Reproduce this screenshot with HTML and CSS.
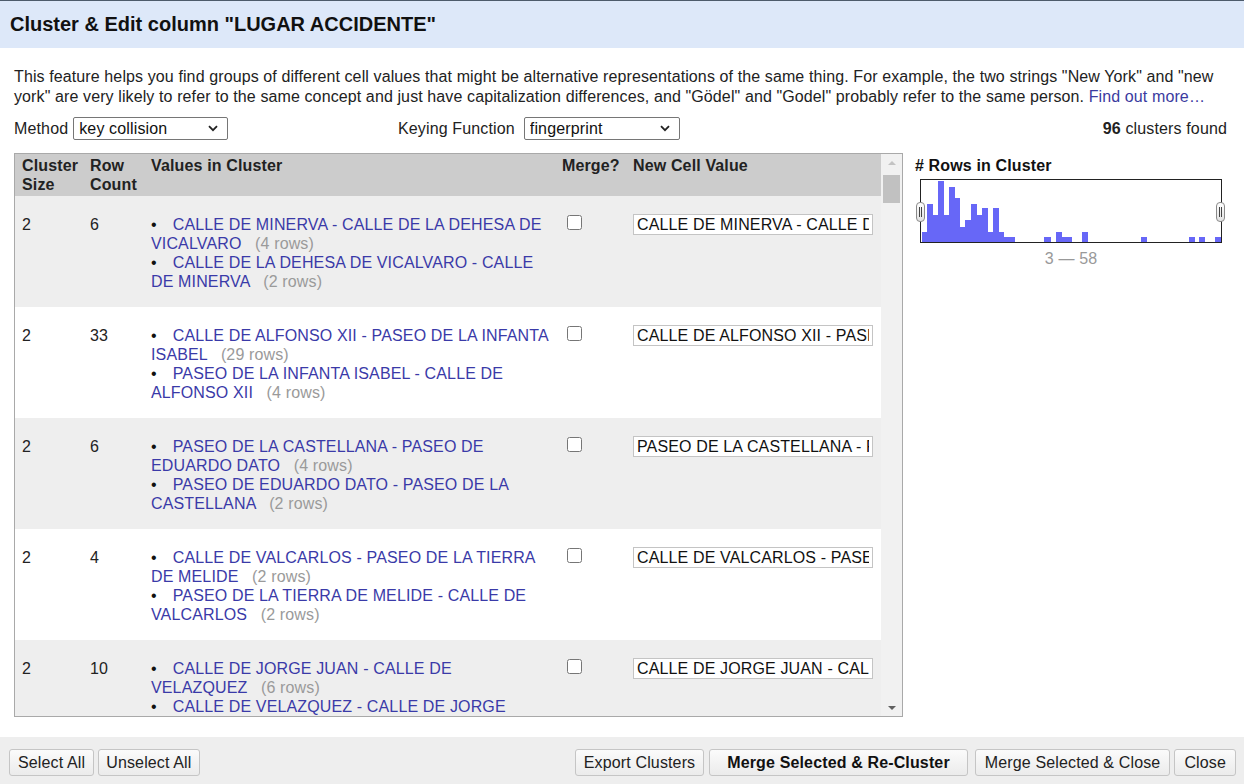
FILE: index.html
```html
<!DOCTYPE html>
<html lang="en">
<head>
<meta charset="utf-8">
<title>Cluster &amp; Edit</title>
<link rel="stylesheet" href="styles.css">
</head>
<body>
<div class="dialog">
  <div class="dialog-header">Cluster &amp; Edit column "LUGAR ACCIDENTE"</div>
  <div class="dialog-body">
    <p class="intro">This feature helps you find groups of different cell values that might be alternative representations of the same thing. For example, the two strings "New York" and "new york" are very likely to refer to the same concept and just have capitalization differences, and "Gödel" and "Godel" probably refer to the same person. <a href="#" class="link">Find out more…</a></p>
    <div class="controls">
      <div class="ctl ctl-method">
        <span>Method</span>
        <span class="sel-wrap">
          <select class="sel"><option>key collision</option></select>
          <svg class="chev" width="10" height="7" viewBox="0 0 10 7"><path d="M1 1.2 L5 5.2 L9 1.2" fill="none" stroke="#222" stroke-width="1.8"/></svg>
        </span>
      </div>
      <div class="ctl ctl-key">
        <span>Keying Function</span>
        <span class="sel-wrap">
          <select class="sel"><option>fingerprint</option></select>
          <svg class="chev" width="10" height="7" viewBox="0 0 10 7"><path d="M1 1.2 L5 5.2 L9 1.2" fill="none" stroke="#222" stroke-width="1.8"/></svg>
        </span>
      </div>
      <div class="found"><b>96</b> clusters found</div>
    </div>
    <div class="main">
      <div class="table-box">
        <div class="table-scroll">
          <table class="clusters">
            <colgroup>
              <col class="c-size"><col class="c-count"><col class="c-values"><col class="c-merge"><col class="c-new">
            </colgroup>
            <thead>
              <tr><th>Cluster Size</th><th>Row Count</th><th>Values in Cluster</th><th>Merge?</th><th>New Cell Value</th></tr>
            </thead>
            <tbody>
              <tr class="odd">
                <td>2</td><td>6</td>
                <td>
                  <div class="val"><span class="bullet">•</span><a href="#">CALLE DE MINERVA - CALLE DE LA DEHESA DE VICALVARO</a> <span class="cnt">(4 rows)</span></div>
                  <div class="val"><span class="bullet">•</span><a href="#">CALLE DE LA DEHESA DE VICALVARO - CALLE DE MINERVA</a> <span class="cnt">(2 rows)</span></div>
                </td>
                <td><input type="checkbox" class="chk"></td>
                <td><input type="text" class="newval" value="CALLE DE MINERVA - CALLE DE LA DEHESA DE VICALVARO"></td>
              </tr>
              <tr class="even">
                <td>2</td><td>33</td>
                <td>
                  <div class="val"><span class="bullet">•</span><a href="#">CALLE DE ALFONSO XII - PASEO DE LA INFANTA ISABEL</a> <span class="cnt">(29 rows)</span></div>
                  <div class="val"><span class="bullet">•</span><a href="#">PASEO DE LA INFANTA ISABEL - CALLE DE ALFONSO XII</a> <span class="cnt">(4 rows)</span></div>
                </td>
                <td><input type="checkbox" class="chk"></td>
                <td><input type="text" class="newval" value="CALLE DE ALFONSO XII - PASEO DE LA INFANTA ISABEL"></td>
              </tr>
              <tr class="odd">
                <td>2</td><td>6</td>
                <td>
                  <div class="val"><span class="bullet">•</span><a href="#">PASEO DE LA CASTELLANA - PASEO DE EDUARDO DATO</a> <span class="cnt">(4 rows)</span></div>
                  <div class="val"><span class="bullet">•</span><a href="#">PASEO DE EDUARDO DATO - PASEO DE LA CASTELLANA</a> <span class="cnt">(2 rows)</span></div>
                </td>
                <td><input type="checkbox" class="chk"></td>
                <td><input type="text" class="newval" value="PASEO DE LA CASTELLANA - PASEO DE EDUARDO DATO"></td>
              </tr>
              <tr class="even">
                <td>2</td><td>4</td>
                <td>
                  <div class="val"><span class="bullet">•</span><a href="#">CALLE DE VALCARLOS - PASEO DE LA TIERRA DE MELIDE</a> <span class="cnt">(2 rows)</span></div>
                  <div class="val"><span class="bullet">•</span><a href="#">PASEO DE LA TIERRA DE MELIDE - CALLE DE VALCARLOS</a> <span class="cnt">(2 rows)</span></div>
                </td>
                <td><input type="checkbox" class="chk"></td>
                <td><input type="text" class="newval" value="CALLE DE VALCARLOS - PASEO DE LA TIERRA DE MELIDE"></td>
              </tr>
              <tr class="odd">
                <td>2</td><td>10</td>
                <td>
                  <div class="val"><span class="bullet">•</span><a href="#">CALLE DE JORGE JUAN - CALLE DE VELAZQUEZ</a> <span class="cnt">(6 rows)</span></div>
                  <div class="val"><span class="bullet">•</span><a href="#">CALLE DE VELAZQUEZ - CALLE DE JORGE JUAN</a> <span class="cnt">(4 rows)</span></div>
                </td>
                <td><input type="checkbox" class="chk"></td>
                <td><input type="text" class="newval" value="CALLE DE JORGE JUAN - CALLE DE VELAZQUEZ"></td>
              </tr>
            </tbody>
          </table>
        </div>
        <div class="scrollbar">
          <div class="sb-btn"><span class="tri-up"></span></div>
          <div class="sb-track"><div class="sb-thumb"></div></div>
          <div class="sb-btn"><span class="tri-down"></span></div>
        </div>
      </div>
      <div class="facet">
        <div class="facet-title"># Rows in Cluster</div>
        <div class="histo">
          <svg class="histo-svg" width="300" height="62" viewBox="0 0 300 62" shape-rendering="crispEdges">
            <g fill="#6767f7">
              <rect x="0.7" y="52" width="5.9" height="10"/>
              <rect x="6.1" y="24" width="5.9" height="38"/>
              <rect x="11.6" y="35" width="5.9" height="27"/>
              <rect x="17" y="1" width="5.9" height="61"/>
              <rect x="22.5" y="35" width="5.9" height="27"/>
              <rect x="28" y="7" width="5.9" height="55"/>
              <rect x="33.4" y="18" width="5.9" height="44"/>
              <rect x="38.9" y="47" width="5.9" height="15"/>
              <rect x="44.3" y="40" width="5.9" height="22"/>
              <rect x="49.8" y="24" width="5.9" height="38"/>
              <rect x="55.2" y="35" width="5.9" height="27"/>
              <rect x="60.7" y="28" width="5.9" height="34"/>
              <rect x="66.1" y="52" width="5.9" height="10"/>
              <rect x="71.6" y="28" width="5.9" height="34"/>
              <rect x="77" y="52" width="5.9" height="10"/>
              <rect x="82.5" y="57" width="11" height="5"/>
              <rect x="123.3" y="57" width="6.3" height="5"/>
              <rect x="134.7" y="52" width="6.3" height="10"/>
              <rect x="140.7" y="57" width="10" height="5"/>
              <rect x="161.3" y="52" width="6" height="10"/>
              <rect x="220" y="57" width="6" height="5"/>
              <rect x="268" y="57" width="6" height="5"/>
              <rect x="278.3" y="57" width="6" height="5"/>
              <rect x="294.3" y="57" width="5.7" height="5"/>
            </g>
          </svg>
          <span class="handle handle-left"></span>
          <span class="handle handle-right"></span>
        </div>
        <div class="range">3 — 58</div>
      </div>
    </div>
  </div>
  <div class="dialog-footer">
    <div class="btn-group">
      <button class="btn">Select All</button>
      <button class="btn btn-tight">Unselect All</button>
    </div>
    <div class="btn-group">
      <button class="btn">Export Clusters</button>
      <button class="btn btn-primary">Merge Selected &amp; Re-Cluster</button>
      <button class="btn btn-wide">Merge Selected &amp; Close</button>
      <button class="btn btn-wide">Close</button>
    </div>
  </div>
</div>
</body>
</html>
```
FILE: styles.css
```css
html, body {
  margin: 0;
  padding: 0;
}
body {
  width: 1244px;
  height: 784px;
  overflow: hidden;
  background: #ffffff;
  font-family: "Liberation Sans", Arial, sans-serif;
  font-size: 16px;
  letter-spacing: 0.14px;
  color: #222;
}
.dialog {
  display: flex;
  flex-direction: column;
  height: 784px;
}
.dialog-header {
  border-top: 1px solid #4d5b6b;
  background: #dde8f9;
  height: 47px;
  display: flex;
  align-items: center;
  padding-left: 10px;
  font-weight: bold;
  font-size: 20px;
  letter-spacing: 0;
  color: #111;
}
.dialog-body {
  padding: 0 14px;
}
.intro {
  margin: 19px 0 0;
  line-height: 20px;
  letter-spacing: 0.11px;
  color: #222;
}
.link {
  color: #3b3ba0;
  text-decoration: none;
}
.controls {
  margin-top: 10px;
  height: 23px;
  display: grid;
  grid-template-columns: 384px 1fr auto;
  align-items: center;
  padding-right: 3px;
}
.ctl {
  display: flex;
  align-items: center;
}
.ctl-method > span:first-child { margin-right: 5px; }
.ctl-key > span:first-child { margin-right: 9px; }
.sel-wrap {
  position: relative;
  display: inline-block;
  height: 23px;
}
.ctl-method .sel { width: 155px; }
.ctl-key .sel { width: 156px; }
.sel {
  -webkit-appearance: none;
  appearance: none;
  display: block;
  height: 23px;
  font-family: "Liberation Sans", Arial, sans-serif;
  font-size: 16px;
  letter-spacing: 0.14px;
  color: #111;
  border: 1px solid #767676;
  border-radius: 2px;
  background: #fff;
  padding: 0 20px 0 5px;
  margin: 0;
}
.chev {
  position: absolute;
  right: 10px;
  top: 8px;
  pointer-events: none;
}
.found {
  color: #222;
}
.main {
  margin-top: 13px;
  display: flex;
  gap: 12px;
}
.table-box {
  width: 889px;
  height: 564px;
  box-sizing: border-box;
  border: 1px solid #a9a9a9;
  display: flex;
}
.table-scroll {
  flex: 1;
  overflow: hidden;
}
.clusters {
  width: 866px;
  border-collapse: collapse;
  table-layout: fixed;
}
.c-size { width: 68px; }
.c-count { width: 61px; }
.c-values { width: 411px; }
.c-merge { width: 71px; }
.c-new { width: 255px; }
.clusters th {
  background: #cccccc;
  text-align: left;
  vertical-align: top;
  font-weight: bold;
  line-height: 19px;
  padding: 2px 4px 2px 7px;
  color: #222;
}
.clusters td {
  vertical-align: top;
  line-height: 19px;
  padding: 19px 4px 16px 7px;
  color: #222;
}
.clusters tr.odd td { background: #eeeeee; }
.clusters tr.even td { background: #ffffff; }
.val a {
  color: #3a3aa8;
  text-decoration: none;
}
.bullet {
  margin-right: 16px;
  color: #111;
}
.cnt {
  color: #9a9a9a;
  margin-left: 9px;
}
.chk {
  margin: -1px 0 0 5px;
  width: 15px;
  height: 15px;
}
.newval {
  display: block;
  width: 240px;
  height: 21px;
  box-sizing: border-box;
  margin: -1px 0 0 0;
  padding: 0 3px;
  border: 1px solid #c4c4c4;
  background: #fff;
  font-family: "Liberation Sans", Arial, sans-serif;
  font-size: 16px;
  letter-spacing: 0.14px;
  color: #111;
}
.scrollbar {
  width: 21px;
  background: #f1f1f1;
  display: flex;
  flex-direction: column;
}
.sb-btn {
  height: 17px;
  display: flex;
  align-items: center;
  justify-content: center;
}
.tri-up {
  width: 0;
  height: 0;
  border-left: 4px solid transparent;
  border-right: 4px solid transparent;
  border-bottom: 4px solid #c3c3c3;
}
.tri-down {
  width: 0;
  height: 0;
  border-left: 4px solid transparent;
  border-right: 4px solid transparent;
  border-top: 4px solid #606060;
}
.sb-track {
  flex: 1;
}
.sb-thumb {
  margin: 4px 2px 0 2px;
  height: 28px;
  background: #c1c1c1;
}
.facet {
  flex: 1;
  padding-top: 3px;
}
.facet-title {
  font-weight: bold;
  line-height: 20px;
  color: #111;
}
.histo {
  position: relative;
  margin: 3px 0 0 5px;
  width: 302px;
  height: 64px;
  box-sizing: border-box;
  border: 1px solid #222;
  background: #fff;
}
.histo-svg {
  display: block;
}
.handle {
  position: absolute;
  top: 22px;
  width: 9px;
  height: 20px;
  box-sizing: border-box;
  border: 1px solid #8a8a8a;
  border-radius: 4px;
  background: linear-gradient(#ffffff, #e2e2e2);
}
.handle::after {
  content: "";
  position: absolute;
  left: 2px;
  top: 4px;
  width: 1px;
  height: 10px;
  border-left: 1px solid #444;
  border-right: 1px solid #444;
}
.handle-left { left: -5px; }
.handle-right { left: 295px; }
.range {
  width: 302px;
  margin: 6px 0 0 5px;
  text-align: center;
  color: #999;
  line-height: 20px;
}
.dialog-footer {
  margin-top: 20px;
  height: 47px;
  box-sizing: border-box;
  background: #eeeeee;
  display: flex;
  justify-content: space-between;
  padding: 12px 8px 0 9px;
}
.btn-group {
  display: flex;
  gap: 4px;
  height: 27px;
}
.btn {
  height: 27px;
  padding: 0 8px;
  margin: 0;
  font-family: "Liberation Sans", Arial, sans-serif;
  font-size: 16px;
  letter-spacing: 0.14px;
  color: #222;
  border: 1px solid #c5c5c5;
  border-radius: 3px;
  background: linear-gradient(#fbfbfb, #ebebeb);
}
.btn-tight {
  padding: 0 7px;
}
.btn-wide {
  padding: 0 9px;
}
.btn-primary {
  font-weight: bold;
  padding: 0 17px;
  margin: 0 3px 0 1px;
  color: #111;
}
```
